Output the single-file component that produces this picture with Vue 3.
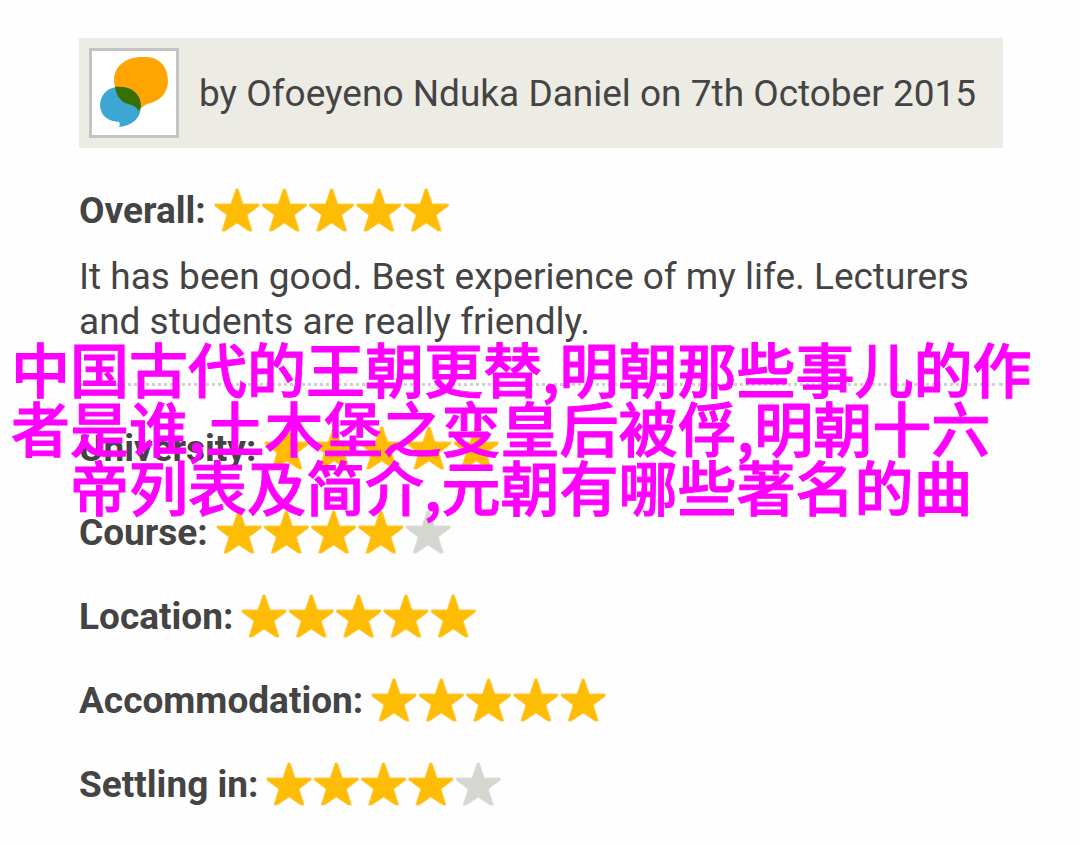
<script setup>
const overall = { label: 'Overall', score: 5 }

const ratings = [
  { label: 'University', score: 5 },
  { label: 'Course', score: 4 },
  { label: 'Location', score: 5 },
  { label: 'Accommodation', score: 5 },
  { label: 'Settling in', score: 4 },
]

const starPoints = '22,1 24,1 29,16 45,16 45,18 33,27 38,43 35,43 23,35 11,43 8,43 13,27 1,18 1,16 17,16'
</script>

<template>
  <article class="review">
    <header class="byline">
      <span class="avatar">
        <svg viewBox="0 -1 84 84" aria-hidden="true">
          <path class="bubble-orange" d="M51 5C68 4 76 15 76 30C75 42 68 49 55 52C51 54 48 57 46 59C45 55 41 53 36 52C27 50 22 39 22 27C23 12 36 5 51 5Z" />
          <path class="bubble-blue" d="M25 35C39 33 49 42 49 54C49 66 40 74 27 75C28 73 28 71 27 70C17 69 9 65 8 54C8 43 15 36 25 35Z" />
          <path class="bubble-overlap" d="M23 35C39 33 49 42 49 54C49 56 48 57 46 59C45 55 41 53 36 52C28 50 24 42 23 35Z" />
        </svg>
      </span>
      <span>by Ofoeyeno Nduka Daniel on 7th October 2015</span>
    </header>

    <section class="rating overall">
      <strong>{{ overall.label }}:</strong>
      <svg class="stars" viewBox="0 0 236 44" role="img" :aria-label="`${overall.score} out of 5`">
        <polygon
          v-for="n in 5"
          :key="n"
          :class="n <= overall.score ? 'star-on' : 'star-off'"
          :points="starPoints"
          :transform="`translate(${(n - 1) * 47.3} 0)`"
        />
      </svg>
    </section>

    <p class="comment">It has been good. Best experience of my life. Lecturers and students are really friendly.</p>

    <section class="details">
      <div v-for="item in ratings" :key="item.label" class="rating">
        <strong>{{ item.label }}:</strong>
        <svg class="stars" viewBox="0 0 236 44" role="img" :aria-label="`${item.score} out of 5`">
          <polygon
            v-for="n in 5"
            :key="n"
            :class="n <= item.score ? 'star-on' : 'star-off'"
            :points="starPoints"
            :transform="`translate(${(n - 1) * 47.3} 0)`"
          />
        </svg>
      </div>
    </section>

    <div class="caption" lang="zh-CN">
      <p>中国古代的王朝更替,明朝那些事儿的作</p>
      <p class="caption-start">者是谁,土木堡之变皇后被俘,明朝十六</p>
      <p>帝列表及简介,元朝有哪些著名的曲</p>
    </div>
  </article>
</template>

<style>
body {
  margin: 0;
  background: #fefefe;
}
</style>

<style scoped>
.review {
  position: relative;
  padding: 38px 77px 38px 79px;
  color: #444;
  font: 400 37px/45px Roboto, sans-serif;
}

.byline {
  display: flex;
  align-items: center;
  gap: 20px;
  padding: 10px;
  background: #ecece4;
}

.avatar {
  box-sizing: border-box;
  flex: none;
  width: 90px;
  height: 90px;
  border: 3px solid #c4c4c4;
  background: #fff;
}

.avatar svg {
  display: block;
  width: 100%;
}

.bubble-orange {
  fill: #ffa400;
}

.bubble-blue {
  fill: #3da7d4;
}

.bubble-overlap {
  fill: #387000;
}

.rating {
  display: flex;
  align-items: center;
  gap: 8px;
  height: 44px;
}

.overall {
  margin-top: 40px;
}

.stars {
  flex: none;
  width: 236px;
  height: 44px;
}

.star-on {
  fill: #ffbc05;
  stroke: #ffcb3d;
}

.star-off {
  fill: #d5d6cf;
  stroke: #dddeda;
}

.comment {
  margin: 22px 0 39px;
}

.details {
  display: grid;
  gap: 40px;
  padding-top: 40px;
  border-top: 3px dotted #d0d0d0;
}

.caption {
  position: absolute;
  top: 338px;
  left: 11px;
  width: max-content;
  color: #f0f;
  font: 500 59px/59px "Noto Sans CJK SC", sans-serif;
  -webkit-text-stroke: 1px #f0f;
  text-align: center;
}

.caption p {
  margin: 0;
}

.caption .caption-start {
  text-align: start;
}
</style>
